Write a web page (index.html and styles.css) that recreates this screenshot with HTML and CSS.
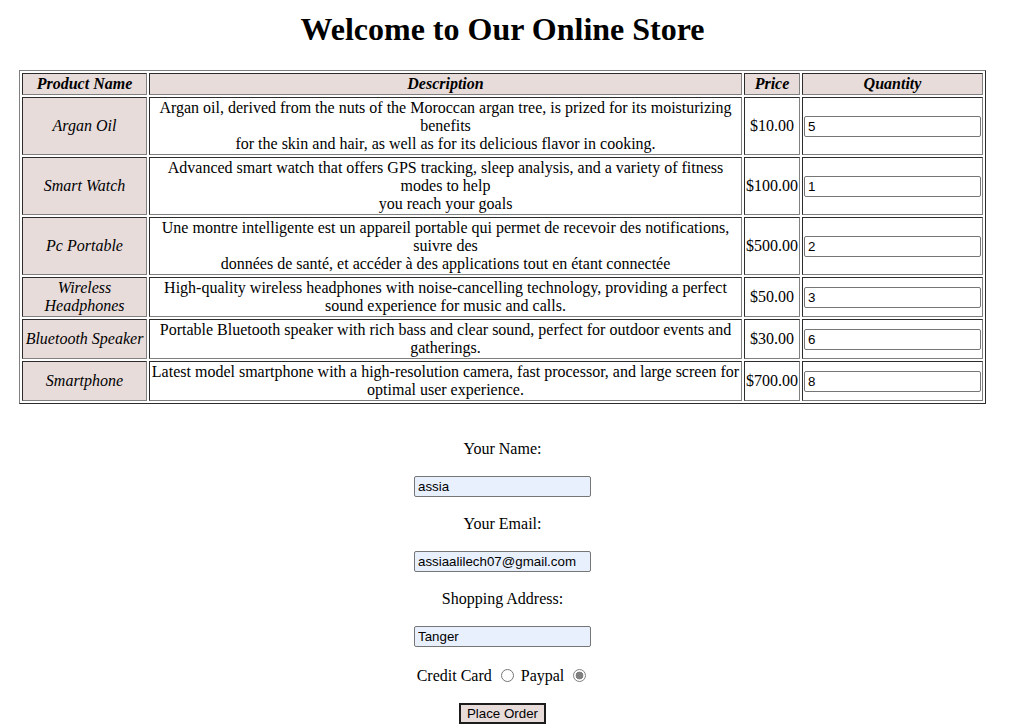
FILE: index.html
```html
<!DOCTYPE html>
<html lang="en">
<head>
<meta charset="utf-8">
<title>Online Store</title>
<link rel="stylesheet" href="styles.css">
</head>
<body>
<div class="page">
  <h1 class="title">Welcome to Our Online Store</h1>
  <table class="products">
    <thead>
      <tr>
        <th class="c-name">Product Name</th>
        <th class="c-desc">Description</th>
        <th class="c-price">Price</th>
        <th class="c-qty">Quantity</th>
      </tr>
    </thead>
    <tbody>
      <tr>
        <td class="pname">Argan Oil</td>
        <td>Argan oil, derived from the nuts of the Moroccan argan tree, is prized for its moisturizing benefits<br>for the skin and hair, as well as for its delicious flavor in cooking.</td>
        <td>$10.00</td>
        <td><input class="qty" type="text" value="5"></td>
      </tr>
      <tr>
        <td class="pname">Smart Watch</td>
        <td>Advanced smart watch that offers GPS tracking, sleep analysis, and a variety of fitness modes to help<br>you reach your goals</td>
        <td>$100.00</td>
        <td><input class="qty" type="text" value="1"></td>
      </tr>
      <tr>
        <td class="pname">Pc Portable</td>
        <td>Une montre intelligente est un appareil portable qui permet de recevoir des notifications, suivre des<br>données de santé, et accéder à des applications tout en étant connectée</td>
        <td>$500.00</td>
        <td><input class="qty" type="text" value="2"></td>
      </tr>
      <tr>
        <td class="pname">Wireless Headphones</td>
        <td>High-quality wireless headphones with noise-cancelling technology, providing a perfect sound experience for music and calls.</td>
        <td>$50.00</td>
        <td><input class="qty" type="text" value="3"></td>
      </tr>
      <tr>
        <td class="pname">Bluetooth Speaker</td>
        <td>Portable Bluetooth speaker with rich bass and clear sound, perfect for outdoor events and gatherings.</td>
        <td>$30.00</td>
        <td><input class="qty" type="text" value="6"></td>
      </tr>
      <tr>
        <td class="pname">Smartphone</td>
        <td>Latest model smartphone with a high-resolution camera, fast processor, and large screen for optimal user experience.</td>
        <td>$700.00</td>
        <td><input class="qty" type="text" value="8"></td>
      </tr>
    </tbody>
  </table>

  <form class="order">
    <div class="row"><label for="name">Your Name:</label></div>
    <div class="row"><input class="field" id="name" type="text" value="assia"></div>
    <div class="row"><label for="email">Your Email:</label></div>
    <div class="row"><input class="field" id="email" type="text" value="assiaalilech07@gmail.com"></div>
    <div class="row"><label for="addr">Shopping Address:</label></div>
    <div class="row"><input class="field" id="addr" type="text" value="Tanger"></div>
    <div class="row radios">
      <label for="cc">Credit Card</label><input class="radio radio-cc" id="cc" type="radio" name="pay">
      <label for="pp">Paypal</label><input class="radio radio-pp" id="pp" type="radio" name="pay" checked>
    </div>
    <div class="row"><button class="btn" type="button">Place Order</button></div>
  </form>
</div>
</body>
</html>
```
FILE: styles.css
```css
html, body {
  margin: 0;
  padding: 0;
  background: #ffffff;
}

body {
  font-family: "Liberation Serif", "Times New Roman", serif;
  font-size: 16px;
  color: #000000;
}

.page {
  width: 1005px;
  padding-top: 11px;
}

.title {
  margin: 0 0 22px;
  font-size: 32px;
  line-height: 37px;
  font-weight: bold;
  text-align: center;
}

.products {
  margin: 0 0 0 19px;
  border: 1px outset #808080;
  border-spacing: 2px;
  border-collapse: separate;
  table-layout: fixed;
  width: 967px;
}

.products th,
.products td {
  border: 1px inset #808080;
  padding: 1px;
  text-align: center;
  vertical-align: middle;
}

.products th {
  background: #e8dcdb;
  font-weight: bold;
  font-style: italic;
}

.c-name { width: 121px; }
.c-desc { width: 589px; }
.c-price { width: 52px; }
.c-qty { width: 177px; }

.products td.pname {
  background: #e8dcdb;
  font-style: italic;
}

.qty,
.field {
  box-sizing: border-box;
  width: 177px;
  height: 21px;
  margin: 0;
  padding: 1px 3px;
  border: 1px solid #767676;
  border-radius: 2px;
  font-family: "Liberation Sans", Arial, sans-serif;
  font-size: 13.33px;
  color: #000000;
  display: block;
}

.qty {
  background: #ffffff;
}

.field {
  background: #e8f0fe;
}

.order {
  margin-top: 34px;
  display: flex;
  flex-direction: column;
  align-items: center;
  gap: 15.5px;
}

.row {
  height: 22px;
  display: flex;
  align-items: center;
  justify-content: center;
}

.radios {
  margin-top: 1px;
  padding-top: 1px;
  margin-right: 2px;
}

.radio {
  appearance: none;
  -webkit-appearance: none;
  box-sizing: border-box;
  width: 13px;
  height: 13px;
  border: 1px solid #767676;
  border-radius: 50%;
  background: #ffffff;
  position: relative;
  top: -1px;
}

.radio-cc {
  margin: 0 7px 0 9px;
}

.radio-pp {
  margin: 0 0 0 9px;
}

.radio:checked {
  background: radial-gradient(circle, #808080 0 3.6px, #ffffff 4.2px);
  border-color: #808080;
}

.btn {
  box-sizing: border-box;
  height: 21px;
  width: 87px;
  padding: 0 4px;
  border: 2px solid #1c1c1c;
  background: #e8dcdb;
  font-family: "Liberation Sans", Arial, sans-serif;
  font-size: 13.33px;
  color: #000000;
  border-radius: 0;
}
```
